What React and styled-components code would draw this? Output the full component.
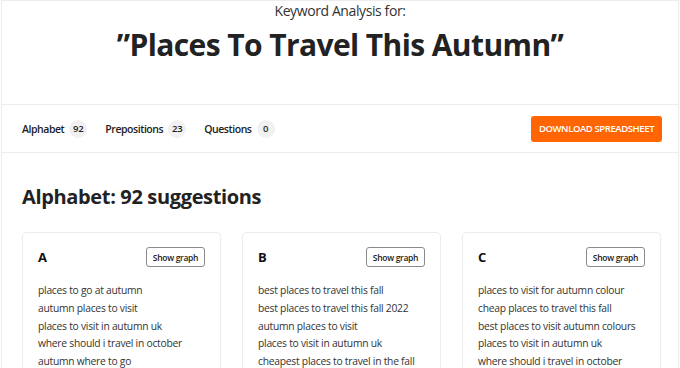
import React from "react";
import styled, { createGlobalStyle } from "styled-components";

const Global = createGlobalStyle`
  html, body { margin: 0; padding: 0; background: #fff; }
  body { font-family: "Open Sans", "Noto Sans", sans-serif; color: #2b2b2b; }
`;

const Page = styled.div`
  width: 678px;
  margin-left: 1px;
  border: 1px solid #ededed;
  border-bottom: none;
  min-height: 367px;
  box-sizing: border-box;
  overflow: hidden;
`;

const Header = styled.header`
  display: flex;
  flex-direction: column;
  align-items: center;
  height: 103px;
  box-sizing: border-box;
  padding-top: 0;
`;

const Subtitle = styled.div`
  font-size: 14px;
  line-height: 20px;
  color: #333;
  letter-spacing: -0.4px;
`;

const Title = styled.h1`
  margin: 4px 0 0;
  font-size: 30px;
  line-height: 40px;
  font-weight: 700;
  color: #222;
  letter-spacing: -0.6px;
`;

const TabBar = styled.nav`
  display: flex;
  align-items: center;
  height: 47px;
  border-top: 1px solid #ededed;
  border-bottom: 1px solid #ededed;
  padding: 0 16px 0 20px;
`;

const Tab = styled.div`
  display: flex;
  align-items: center;
  gap: 5px;
  font-size: 10.5px;
  font-weight: 600;
  color: #222;
  margin-right: 18px;
  letter-spacing: -0.45px;
`;

const Badge = styled.span`
  display: inline-flex;
  align-items: center;
  justify-content: center;
  min-width: 18px;
  height: 18px;
  padding: 0 2px;
  border-radius: 9px;
  background: #f1f1f1;
  font-size: 9.5px;
  font-weight: 600;
  letter-spacing: -0.2px;
  box-sizing: border-box;
`;

const Spacer = styled.div`
  flex: 1;
`;

const Download = styled.button`
  width: 131px;
  height: 26px;
  padding: 0;
  border: none;
  border-radius: 3px;
  background: #ff6503;
  color: #fff;
  font-family: inherit;
  font-size: 9.5px;
  font-weight: 600;
  letter-spacing: -0.4px;
  text-transform: uppercase;
  white-space: nowrap;
  cursor: pointer;
`;

const Section = styled.section`
  padding: 30px 16px 0 20px;
`;

const SectionTitle = styled.h2`
  margin: 0 0 21px;
  font-size: 20px;
  line-height: 28px;
  font-weight: 700;
  color: #222;
  letter-spacing: -0.35px;
`;

const Grid = styled.div`
  display: grid;
  grid-template-columns: repeat(3, 199px);
  gap: 21px;
`;

const Card = styled.div`
  border: 1px solid #ececec;
  border-bottom: none;
  border-radius: 5px 5px 0 0;
  padding: 14px 15px 0 15px;
  height: 140px;
  box-sizing: border-box;
`;

const CardHead = styled.div`
  display: flex;
  align-items: center;
  justify-content: space-between;
  margin-bottom: 15px;
`;

const Letter = styled.div`
  font-size: 13px;
  font-weight: 700;
  color: #111;
`;

const GraphButton = styled.button`
  width: 59px;
  height: 20px;
  padding: 0;
  border: 1px solid #8a8a8a;
  border-radius: 3px;
  background: #fff;
  font-family: inherit;
  font-size: 8.5px;
  font-weight: 600;
  color: #222;
  letter-spacing: -0.3px;
  white-space: nowrap;
`;

const List = styled.ul`
  list-style: none;
  margin: 0;
  padding: 0;
`;

const Item = styled.li`
  font-size: 10.3px;
  line-height: 17.8px;
  color: #333;
  letter-spacing: -0.25px;
  white-space: nowrap;
`;

const tabs = [
  ["Alphabet", 92],
  ["Prepositions", 23],
  ["Questions", 0],
];

const cards = [
  {
    letter: "A",
    items: [
      "places to go at autumn",
      "autumn places to visit",
      "places to visit in autumn uk",
      "where should i travel in october",
      "autumn where to go",
    ],
  },
  {
    letter: "B",
    items: [
      "best places to travel this fall",
      "best places to travel this fall 2022",
      "autumn places to visit",
      "places to visit in autumn uk",
      "cheapest places to travel in the fall",
    ],
  },
  {
    letter: "C",
    items: [
      "places to visit for autumn colour",
      "cheap places to travel this fall",
      "best places to visit autumn colours",
      "places to visit in autumn uk",
      "where should i travel in october",
    ],
  },
];

export default function App() {
  return (
    <>
      <Global />
      <Page>
        <Header>
          <Subtitle>Keyword Analysis for:</Subtitle>
          <Title>”Places To Travel This Autumn”</Title>
        </Header>
        <TabBar>
          {tabs.map(([name, n]) => (
            <Tab key={name}>
              {name}
              <Badge>{n}</Badge>
            </Tab>
          ))}
          <Spacer />
          <Download>Download Spreadsheet</Download>
        </TabBar>
        <Section>
          <SectionTitle>Alphabet: 92 suggestions</SectionTitle>
          <Grid>
            {cards.map((c) => (
              <Card key={c.letter}>
                <CardHead>
                  <Letter>{c.letter}</Letter>
                  <GraphButton>Show graph</GraphButton>
                </CardHead>
                <List>
                  {c.items.map((it, i) => (
                    <Item key={i}>{it}</Item>
                  ))}
                </List>
              </Card>
            ))}
          </Grid>
        </Section>
      </Page>
    </>
  );
}
